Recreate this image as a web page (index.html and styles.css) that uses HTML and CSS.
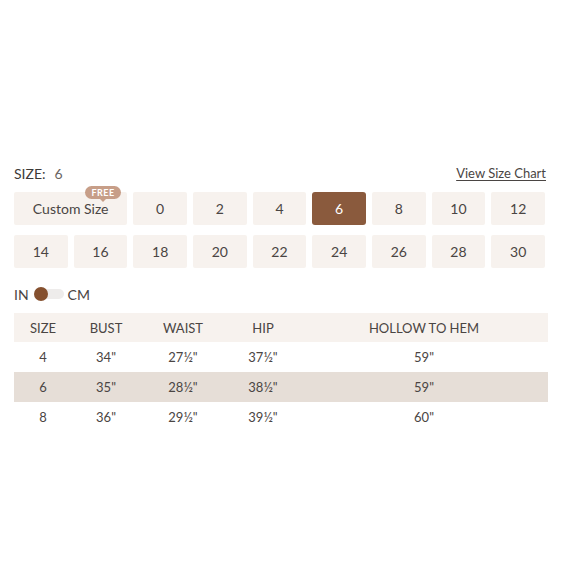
FILE: index.html
```html
<!DOCTYPE html>
<html>
<head>
<meta charset="utf-8">
<link rel="stylesheet" href="styles.css">
</head>
<body>
<div class="wrap">
  <div class="size-head">
    <div class="size-label">SIZE:<span class="size-val">6</span></div>
    <a class="chart-link">View Size Chart</a>
  </div>
  <div class="grid">
    <div class="btn custom">Custom Size<span class="badge">FREE</span></div>
    <div class="btn">0</div>
    <div class="btn">2</div>
    <div class="btn">4</div>
    <div class="btn active">6</div>
    <div class="btn">8</div>
    <div class="btn">10</div>
    <div class="btn">12</div>
    <div class="btn">14</div>
    <div class="btn">16</div>
    <div class="btn">18</div>
    <div class="btn">20</div>
    <div class="btn">22</div>
    <div class="btn">24</div>
    <div class="btn">26</div>
    <div class="btn">28</div>
    <div class="btn">30</div>
  </div>
  <div class="unit">
    <span>IN</span>
    <span class="switch"><span class="knob"></span></span>
    <span>CM</span>
  </div>
  <table class="chart">
    <thead>
      <tr><th class="c1">SIZE</th><th class="c2">BUST</th><th class="c3">WAIST</th><th class="c4">HIP</th><th>HOLLOW TO HEM</th></tr>
    </thead>
    <tbody>
      <tr><td>4</td><td>34"</td><td>27½"</td><td>37½"</td><td>59"</td></tr>
      <tr class="hl"><td>6</td><td>35"</td><td>28½"</td><td>38½"</td><td>59"</td></tr>
      <tr><td>8</td><td>36"</td><td>29½"</td><td>39½"</td><td>60"</td></tr>
    </tbody>
  </table>
</div>
</body>
</html>
```
FILE: styles.css
```css
html, body {
  margin: 0;
  padding: 0;
  background: #fff;
}
body {
  font-family: "Lato", "Open Sans", sans-serif;
  color: #4a4543;
}
.wrap {
  width: 533px;
  margin-left: 14px;
  padding-top: 163px;
}
.size-head {
  display: flex;
  justify-content: space-between;
  align-items: center;
  height: 20px;
  font-size: 14px;
}
.size-label {
  color: #3d3a38;
}
.size-val {
  margin-left: 9px;
  color: #6a6562;
}
.chart-link {
  font-size: 13px;
  color: #4a4543;
  text-decoration: underline;
  text-underline-offset: 2px;
  margin-right: 1px;
}
.grid {
  display: grid;
  grid-template-columns: repeat(9, 1fr);
  column-gap: 6px;
  row-gap: 10px;
  margin-top: 9px;
  margin-right: 2px;
}
.btn {
  position: relative;
  height: 33px;
  display: flex;
  align-items: center;
  justify-content: center;
  background: #f7f2ee;
  border-radius: 2px;
  font-size: 14px;
  color: #4a4543;
}
.btn.custom {
  grid-column: span 2;
}
.btn.active {
  background: #8a5a3d;
  color: #fff;
  border-radius: 3px;
}
.badge {
  position: absolute;
  left: 71px;
  top: -6px;
  width: 36px;
  height: 13px;
  line-height: 13px;
  border-radius: 7px;
  background: #c79e88;
  color: #fff;
  font-size: 9px;
  font-weight: 700;
  letter-spacing: 0.5px;
  text-align: center;
}
.badge::after {
  content: "";
  position: absolute;
  left: 15px;
  bottom: -3px;
  border-left: 3px solid transparent;
  border-right: 3px solid transparent;
  border-top: 3px solid #c79e88;
}
.unit {
  display: flex;
  align-items: center;
  height: 20px;
  margin-top: 16px;
  font-size: 14px;
  color: #4a4543;
}
.switch {
  position: relative;
  width: 30px;
  height: 10px;
  margin: 0 4px 0 5px;
  background: #eeeceb;
  border-radius: 5px;
}
.knob {
  position: absolute;
  left: 0;
  top: -2px;
  width: 14px;
  height: 14px;
  border-radius: 50%;
  background: #85502f;
}
.chart {
  width: 534px;
  margin-top: 9px;
  border-collapse: collapse;
  font-size: 13px;
  color: #4a4543;
}
.chart th, .chart td {
  font-weight: 400;
  text-align: center;
  padding: 0;
}
.chart th {
  height: 29px;
  background: #f7f2ee;
}
.chart td {
  height: 30px;
}
.chart tr.hl td {
  background: #e6ded7;
}
.c1 { width: 58px; }
.c2 { width: 68px; }
.c3 { width: 86px; }
.c4 { width: 74px; }
```
